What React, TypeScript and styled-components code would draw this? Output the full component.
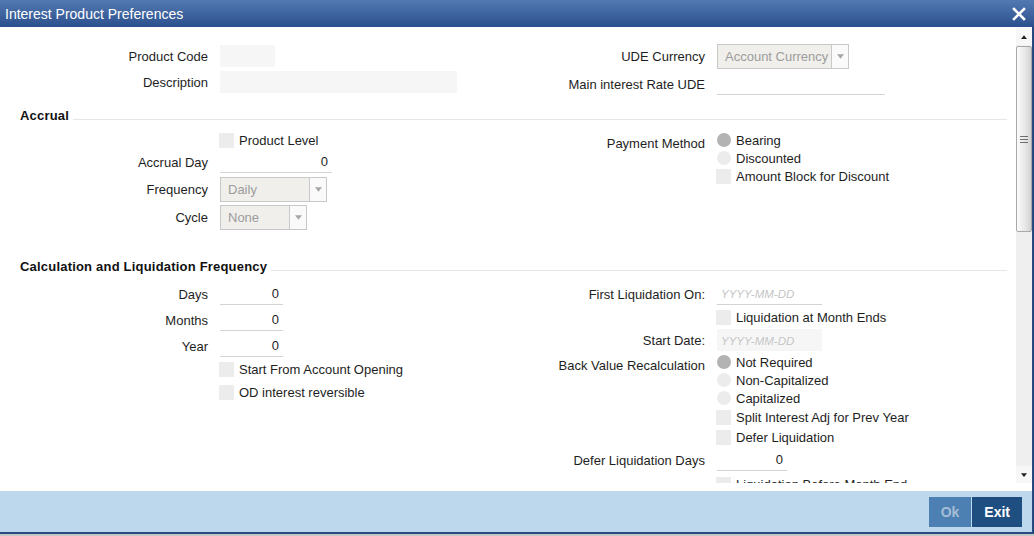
import React from 'react';
import styled, { createGlobalStyle } from 'styled-components';

const GlobalStyle = createGlobalStyle`
  html, body {
    margin: 0;
    padding: 0;
    background: #c6c6c6;
  }
  body {
    font-family: "Liberation Sans", Arial, sans-serif;
    font-size: 13px;
    color: #1e1e1e;
  }
  * {
    box-sizing: border-box;
  }
`;

const Window = styled.div`
  width: 1034px;
  height: 534px;
  display: flex;
  flex-direction: column;
  background: #fff;
  border-right: 2px solid #26497f;
  border-bottom: 2px solid #26497f;
`;

const TitleBar = styled.div`
  height: 27px;
  flex: none;
  display: flex;
  align-items: center;
  justify-content: space-between;
  padding: 0 7px 0 5px;
  margin-right: -2px;
  background: linear-gradient(#5379b2, #2b508d);
  color: #fff;
  font-size: 14px;
`;

const CloseButton = styled.button`
  width: 16px;
  height: 16px;
  padding: 0;
  border: none;
  background: none;
  display: flex;
  align-items: center;
  justify-content: center;
  cursor: pointer;
`;

const Main = styled.div`
  height: 456px;
  flex: none;
  display: flex;
`;

const Content = styled.div`
  flex: 1;
  overflow: hidden;
  padding-right: 9px;
`;

const BottomGap = styled.div`
  height: 8px;
  flex: none;
`;

const ScrollBar = styled.div`
  width: 16px;
  flex: none;
  display: flex;
  flex-direction: column;
  background: #efefef;
  margin-top: 1px;
`;

const ScrollArrow = styled.div`
  height: 17px;
  flex: none;
  display: flex;
  align-items: center;
  justify-content: center;
  background: #f7f7f7;
`;

const ScrollThumb = styled.div`
  height: 186px;
  flex: none;
  margin: 1px 0 0;
  border: 1px solid #a8a8a8;
  border-radius: 2px;
  background: linear-gradient(90deg, #fbfbfb, #e6e6e6 60%, #d2d2d2);
  display: flex;
  align-items: center;
  justify-content: center;
`;

const ScrollTrack = styled.div`
  flex: 1;
`;

const Section = styled.section<{ $after: number }>`
  margin-bottom: ${(p) => p.$after}px;
`;

const SectionHead = styled.div<{ $gap: number }>`
  height: 16px;
  display: flex;
  align-items: center;
  padding-left: 20px;
  margin-bottom: ${(p) => p.$gap}px;
`;

const HeadText = styled.h3`
  margin: 0;
  font-size: 13px;
  font-weight: bold;
  letter-spacing: 0.2px;
  color: #111;
  white-space: nowrap;
`;

const HeadRule = styled.div`
  flex: 1;
  height: 1px;
  background: #e6e6e6;
  margin: 8px 0 0 4px;
`;

const Columns = styled.div<{ $top?: number }>`
  display: grid;
  grid-template-columns: 497px 1fr;
  align-items: start;
  margin-top: ${(p) => p.$top ?? 0}px;
`;

const Column = styled.div`
  display: flex;
  flex-direction: column;
`;

const Row = styled.div<{ $h: number }>`
  height: ${(p) => p.$h}px;
  display: grid;
  grid-template-columns: 208px auto;
  column-gap: 12px;
  align-items: center;
  justify-items: start;
`;

const GroupRow = styled.div`
  display: grid;
  grid-template-columns: 208px auto;
  column-gap: 12px;
  align-items: start;
`;

const Label = styled.label<{ $top?: number }>`
  justify-self: end;
  text-align: right;
  white-space: nowrap;
  line-height: 15px;
  padding-top: ${(p) => p.$top ?? 0}px;
`;

const Options = styled.div`
  display: flex;
  flex-direction: column;
`;

const Option = styled.div<{ $h?: number }>`
  height: ${(p) => p.$h ?? 18}px;
  display: flex;
  align-items: center;
  gap: 5px;
  white-space: nowrap;
  line-height: 15px;
`;

const CheckBox = styled.span`
  width: 15px;
  height: 15px;
  flex: none;
  background: #ececec;
  margin-left: -1px;
`;

const Radio = styled.span<{ $on?: boolean }>`
  width: 14px;
  height: 14px;
  flex: none;
  border-radius: 50%;
  background: ${(p) => (p.$on ? '#b3b3b3' : '#ececec')};
`;

const LineInput = styled.input<{ $w: number; $align?: string }>`
  width: ${(p) => p.$w}px;
  height: 22px;
  margin: 0;
  padding: 0 4px 0 4px;
  border: none;
  border-bottom: 1px solid #d3d3d3;
  background: #fff;
  font-family: inherit;
  font-size: 13px;
  color: #1e1e1e;
  text-align: ${(p) => p.$align ?? 'right'};
  outline: none;

  &::placeholder {
    color: #c6c6c6;
    font-style: italic;
    font-size: 11.5px;
  }
`;

const FillInput = styled.input<{ $w: number }>`
  width: ${(p) => p.$w}px;
  height: 22px;
  margin: 0;
  padding: 0 4px;
  border: none;
  background: #f6f6f6;
  font-family: inherit;
  font-size: 13px;
  outline: none;

  &::placeholder {
    color: #c6c6c6;
    font-style: italic;
    font-size: 11.5px;
  }
`;

const SelectBox = styled.div<{ $w: number }>`
  width: ${(p) => p.$w}px;
  height: 25px;
  display: flex;
  border: 1px solid #c8c8c8;
  background: #f0efeb;
`;

const SelectText = styled.span`
  flex: 1;
  padding-left: 7px;
  line-height: 23px;
  color: #9c9c9c;
  white-space: nowrap;
  overflow: hidden;
`;

const SelectArrow = styled.span`
  width: 17px;
  flex: none;
  display: flex;
  align-items: center;
  justify-content: center;
  border-left: 1px solid #c8c8c8;
  background: #fafafa;
`;

const Footer = styled.div`
  flex: 1;
  display: flex;
  align-items: center;
  justify-content: flex-end;
  gap: 1px;
  padding: 0 10px 0 0;
  background: #bdd8ed;
`;

const FooterButton = styled.button<{ $primary?: boolean }>`
  height: 30px;
  padding: 0 12px;
  border: none;
  font-family: inherit;
  font-size: 14px;
  font-weight: bold;
  background: ${(p) => (p.$primary ? '#1f4f80' : '#4d80b2')};
  color: ${(p) => (p.$primary ? '#fff' : '#a4bdd6')};
  cursor: pointer;
`;

const Triangle: React.FC<{ down?: boolean; color?: string; w?: number }> = ({ down = true, color = '#a6a6a6', w = 7 }) => (
  <svg width={w} height={Math.ceil(w / 2) + 1} viewBox="0 0 8 5">
    <path d={down ? 'M0 0 L8 0 L4 5 Z' : 'M0 5 L8 5 L4 0 Z'} fill={color} />
  </svg>
);

const Select: React.FC<{ w: number; value: string }> = ({ w, value }) => (
  <SelectBox $w={w}>
    <SelectText>{value}</SelectText>
    <SelectArrow>
      <Triangle />
    </SelectArrow>
  </SelectBox>
);

const Check: React.FC<{ label: string; h?: number }> = ({ label, h }) => (
  <Option $h={h}>
    <CheckBox />
    {label}
  </Option>
);

const RadioOption: React.FC<{ label: string; on?: boolean }> = ({ label, on }) => (
  <Option>
    <Radio $on={on} />
    {label}
  </Option>
);

const Heading: React.FC<{ title: string; gap: number }> = ({ title, gap }) => (
  <SectionHead $gap={gap}>
    <HeadText>{title}</HeadText>
    <HeadRule />
  </SectionHead>
);

const Empty = () => <span />;

const App: React.FC = () => {
  return (
    <>
      <GlobalStyle />
      <Window>
        <TitleBar>
          <span>Interest Product Preferences</span>
          <CloseButton aria-label="Close">
            <svg width="14" height="14" viewBox="0 0 14 14">
              <path d="M2 2 L12 12 M12 2 L2 12" stroke="#fff" strokeWidth="2.6" strokeLinecap="square" />
            </svg>
          </CloseButton>
        </TitleBar>

        <Main>
          <Content>
            <Section $after={8}>
              <Columns $top={16}>
                <Column>
                  <Row $h={26}>
                    <Label>Product Code</Label>
                    <FillInput $w={55} readOnly />
                  </Row>
                  <Row $h={26}>
                    <Label>Description</Label>
                    <FillInput $w={237} readOnly />
                  </Row>
                </Column>
                <Column>
                  <Row $h={26}>
                    <Label>UDE Currency</Label>
                    <Select w={132} value="Account Currency" />
                  </Row>
                  <Row $h={30}>
                    <Label>Main interest Rate UDE</Label>
                    <LineInput $w={168} readOnly />
                  </Row>
                </Column>
              </Columns>
            </Section>

            <Section $after={26}>
              <Heading title="Accrual" gap={8} />
              <Columns>
                <Column>
                  <Row $h={18}>
                    <Empty />
                    <Check label="Product Level" />
                  </Row>
                  <Row $h={26}>
                    <Label>Accrual Day</Label>
                    <LineInput $w={112} value="0" readOnly />
                  </Row>
                  <Row $h={28}>
                    <Label>Frequency</Label>
                    <Select w={107} value="Daily" />
                  </Row>
                  <Row $h={29}>
                    <Label>Cycle</Label>
                    <Select w={87} value="None" />
                  </Row>
                </Column>
                <Column>
                  <GroupRow>
                    <Label $top={5}>Payment Method</Label>
                    <Options>
                      <RadioOption label="Bearing" on />
                      <RadioOption label="Discounted" />
                      <Check label="Amount Block for Discount" />
                    </Options>
                  </GroupRow>
                </Column>
              </Columns>
            </Section>

            <Section $after={0}>
              <Heading title="Calculation and Liquidation Frequency" gap={7} />
              <Columns>
                <Column>
                  <Row $h={26}>
                    <Label>Days</Label>
                    <LineInput $w={63} value="0" readOnly />
                  </Row>
                  <Row $h={26}>
                    <Label>Months</Label>
                    <LineInput $w={63} value="0" readOnly />
                  </Row>
                  <Row $h={26}>
                    <Label>Year</Label>
                    <LineInput $w={63} value="0" readOnly />
                  </Row>
                  <Row $h={20}>
                    <Empty />
                    <Check label="Start From Account Opening" h={20} />
                  </Row>
                  <Row $h={26}>
                    <Empty />
                    <Check label="OD interest reversible" h={26} />
                  </Row>
                </Column>
                <Column>
                  <Row $h={26}>
                    <Label>First Liquidation On:</Label>
                    <LineInput $w={105} $align="left" placeholder="YYYY-MM-DD" readOnly />
                  </Row>
                  <Row $h={20}>
                    <Empty />
                    <Check label="Liquidation at Month Ends" h={20} />
                  </Row>
                  <Row $h={26}>
                    <Label>Start Date:</Label>
                    <FillInput $w={105} placeholder="YYYY-MM-DD" readOnly />
                  </Row>
                  <GroupRow>
                    <Label $top={5}>Back Value Recalculation</Label>
                    <Options>
                      <RadioOption label="Not Required" on />
                      <RadioOption label="Non-Capitalized" />
                      <RadioOption label="Capitalized" />
                      <Check label="Split Interest Adj for Prev Year" h={20} />
                      <Check label="Defer Liquidation" h={20} />
                    </Options>
                  </GroupRow>
                  <Row $h={26}>
                    <Label>Defer Liquidation Days</Label>
                    <LineInput $w={70} value="0" readOnly />
                  </Row>
                  <Row $h={22}>
                    <Empty />
                    <Check label="Liquidation Before Month End" h={22} />
                  </Row>
                </Column>
              </Columns>
            </Section>
          </Content>

          <ScrollBar>
            <ScrollArrow>
              <Triangle down={false} color="#222" w={6} />
            </ScrollArrow>
            <ScrollThumb>
              <svg width="8" height="7" viewBox="0 0 8 7">
                <path d="M0 0.5 H8 M0 3.5 H8 M0 6.5 H8" stroke="#6e6e6e" strokeWidth="1" />
              </svg>
            </ScrollThumb>
            <ScrollTrack />
            <ScrollArrow>
              <Triangle color="#222" w={6} />
            </ScrollArrow>
          </ScrollBar>
        </Main>
        <BottomGap />

        <Footer>
          <FooterButton>Ok</FooterButton>
          <FooterButton $primary>Exit</FooterButton>
        </Footer>
      </Window>
    </>
  );
};

export default App;
